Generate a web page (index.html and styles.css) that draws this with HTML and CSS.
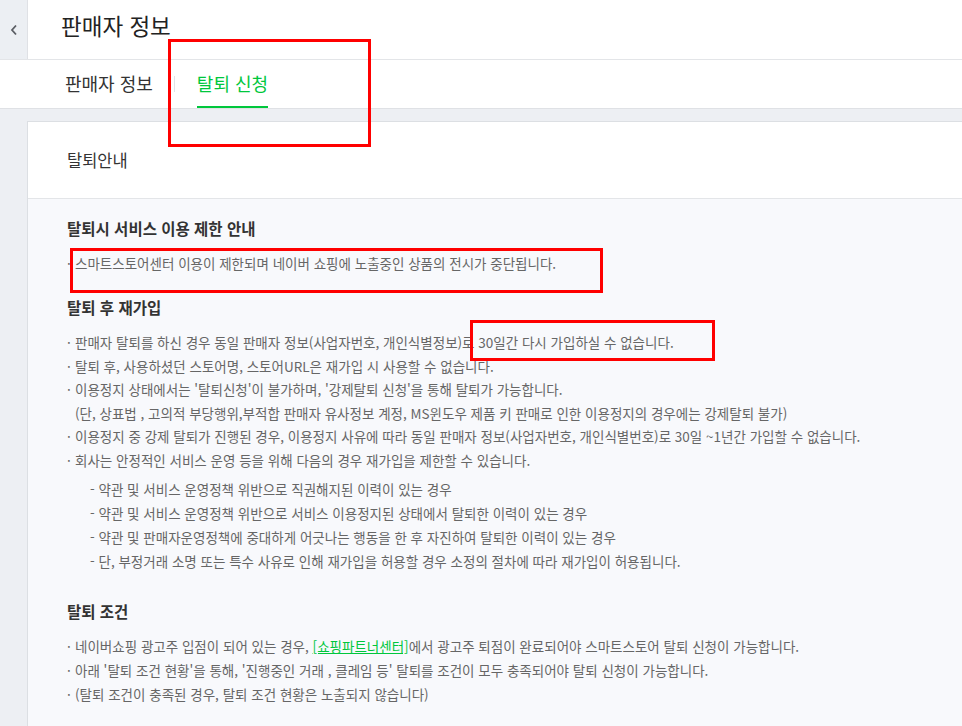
FILE: index.html
```html
<!DOCTYPE html>
<html lang="ko">
<head>
<meta charset="utf-8">
<title>판매자 정보</title>
<link rel="stylesheet" href="styles.css">
</head>
<body>
<div class="page">
  <header class="topbar">
    <div class="back">
      <svg width="8" height="12" viewBox="0 0 8 12"><path d="M6 1.5 L2 6 L6 10.5" fill="none" stroke="#5a5d63" stroke-width="1.8"/></svg>
    </div>
    <h1 class="title">판매자 정보</h1>
  </header>
  <nav class="tabs">
    <span class="tab">판매자 정보</span>
    <span class="sep"></span>
    <span class="tab active">탈퇴 신청</span>
  </nav>
  <main class="main">
    <section class="card">
      <div class="card-head">탈퇴안내</div>
      <div class="card-body">
        <h2 class="h first">탈퇴시 서비스 이용 제한 안내</h2>
        <ul class="list">
          <li>스마트스토어센터 이용이 제한되며 네이버 쇼핑에 노출중인 상품의 전시가 중단됩니다.</li>
        </ul>
        <h2 class="h second">탈퇴 후 재가입</h2>
        <ul class="list tight">
          <li>판매자 탈퇴를 하신 경우 동일 판매자 정보(사업자번호, 개인식별정보)로 30일간 다시 가입하실 수 없습니다.</li>
          <li>탈퇴 후, 사용하셨던 스토어명, 스토어URL은 재가입 시 사용할 수 없습니다.</li>
          <li>이용정지 상태에서는 '탈퇴신청'이 불가하며, '강제탈퇴 신청'을 통해 탈퇴가 가능합니다.<br>(단, 상표법 , 고의적 부당행위,부적합 판매자 유사정보 계정, MS윈도우 제품 키 판매로 인한 이용정지의 경우에는 강제탈퇴 불가)</li>
          <li>이용정지 중 강제 탈퇴가 진행된 경우, 이용정지 사유에 따라 동일 판매자 정보(사업자번호, 개인식별번호)로 30일 ~1년간 가입할 수 없습니다.</li>
          <li>회사는 안정적인 서비스 운영 등을 위해 다음의 경우 재가입을 제한할 수 있습니다.</li>
        </ul>
        <ul class="sub">
          <li>- 약관 및 서비스 운영정책 위반으로 직권해지된 이력이 있는 경우</li>
          <li>- 약관 및 서비스 운영정책 위반으로 서비스 이용정지된 상태에서 탈퇴한 이력이 있는 경우</li>
          <li>- 약관 및 판매자운영정책에 중대하게 어긋나는 행동을 한 후 자진하여 탈퇴한 이력이 있는 경우</li>
          <li>- 단, 부정거래 소명 또는 특수 사유로 인해 재가입을 허용할 경우 소정의 절차에 따라 재가입이 허용됩니다.</li>
        </ul>
        <h2 class="h third">탈퇴 조건</h2>
        <ul class="list">
          <li>네이버쇼핑 광고주 입점이 되어 있는 경우, <a class="link" href="#">[쇼핑파트너센터]</a>에서 광고주 퇴점이 완료되어야 스마트스토어 탈퇴 신청이 가능합니다.</li>
          <li>아래 '탈퇴 조건 현황'을 통해, '진행중인 거래 , 클레임 등' 탈퇴를 조건이 모두 충족되어야 탈퇴 신청이 가능합니다.</li>
          <li>(탈퇴 조건이 충족된 경우, 탈퇴 조건 현황은 노출되지 않습니다)</li>
        </ul>
      </div>
    </section>
  </main>
</div>
<div class="mark mark-tab"></div>
<div class="mark mark-line1"></div>
<div class="mark mark-line2"></div>
</body>
</html>
```

FILE: styles.css
```css
* { box-sizing: border-box; }
html, body { margin: 0; padding: 0; }
body {
  width: 962px;
  height: 726px;
  overflow: hidden;
  position: relative;
  background: #edeff3;
  font-family: "Noto Sans CJK KR", "Noto Sans", sans-serif;
  color: #333;
}
.page { width: 962px; }
.topbar {
  display: flex;
  align-items: stretch;
  height: 60px;
  background: #fff;
  border-bottom: 1px solid #e3e5e8;
}
.back {
  width: 28px;
  background: #eceff3;
  border-right: 1px solid #dfe1e5;
  display: flex;
  align-items: center;
  justify-content: center;
  padding-top: 1px;
}
.title {
  margin: 0;
  padding-left: 33px;
  font-size: 22.5px;
  font-weight: 400;
  line-height: 50px;
  color: #222;
}
.tabs {
  display: flex;
  align-items: center;
  height: 49px;
  background: #fff;
  border-bottom: 1px solid #dfe1e5;
  padding-left: 65px;
}
.tab {
  font-size: 18px;
  color: #333;
  line-height: 47px;
  height: 48px;
}
.tab.active {
  color: #00c73c;
  border-bottom: 2px solid #00c73c;
}
.sep {
  width: 1px;
  height: 16px;
  background: #e0e2e6;
  margin: 0 22px 0 21px;
}
.main {
  padding: 12px 0 0 27px;
}
.card {
  background: #fff;
  border: 1px solid #dcdfe3;
  border-right: none;
}
.card-head {
  height: 77px;
  padding-left: 39px;
  font-size: 16.5px;
  line-height: 76px;
  color: #333;
  border-bottom: 1px solid #e3e5e8;
}
.card-body {
  background: #f8f9fc;
  padding: 18px 0 40px 39px;
}
.h {
  margin: 0;
  font-size: 15.5px;
  font-weight: 700;
  line-height: 22px;
  color: #333;
}
.h.second { margin-top: 21px; }
.h.third { margin-top: 27px; }
.list, .sub {
  list-style: none;
  margin: 0;
  padding: 0;
  font-size: 13.5px;
  color: #666;
}
.list { margin-top: 12px; line-height: 24px; }
.list.tight { margin-top: 13px; line-height: 23.6px; }
.list li { padding-left: 8px; }
.list li::before {
  content: "·";
  display: inline-block;
  width: 8px;
  margin-left: -8px;
  color: #666;
}
.sub {
  margin-top: 4px;
  padding-left: 23px;
  line-height: 24px;
}
.link {
  color: #00c73c;
  text-decoration: underline;
}
.mark {
  position: absolute;
  border: 3px solid #ff0000;
  pointer-events: none;
}
.mark-tab { left: 168px; top: 39px; width: 203px; height: 108px; }
.mark-line1 { left: 70px; top: 248px; width: 533px; height: 45px; }
.mark-line2 { left: 470px; top: 320px; width: 245px; height: 41px; }
```
